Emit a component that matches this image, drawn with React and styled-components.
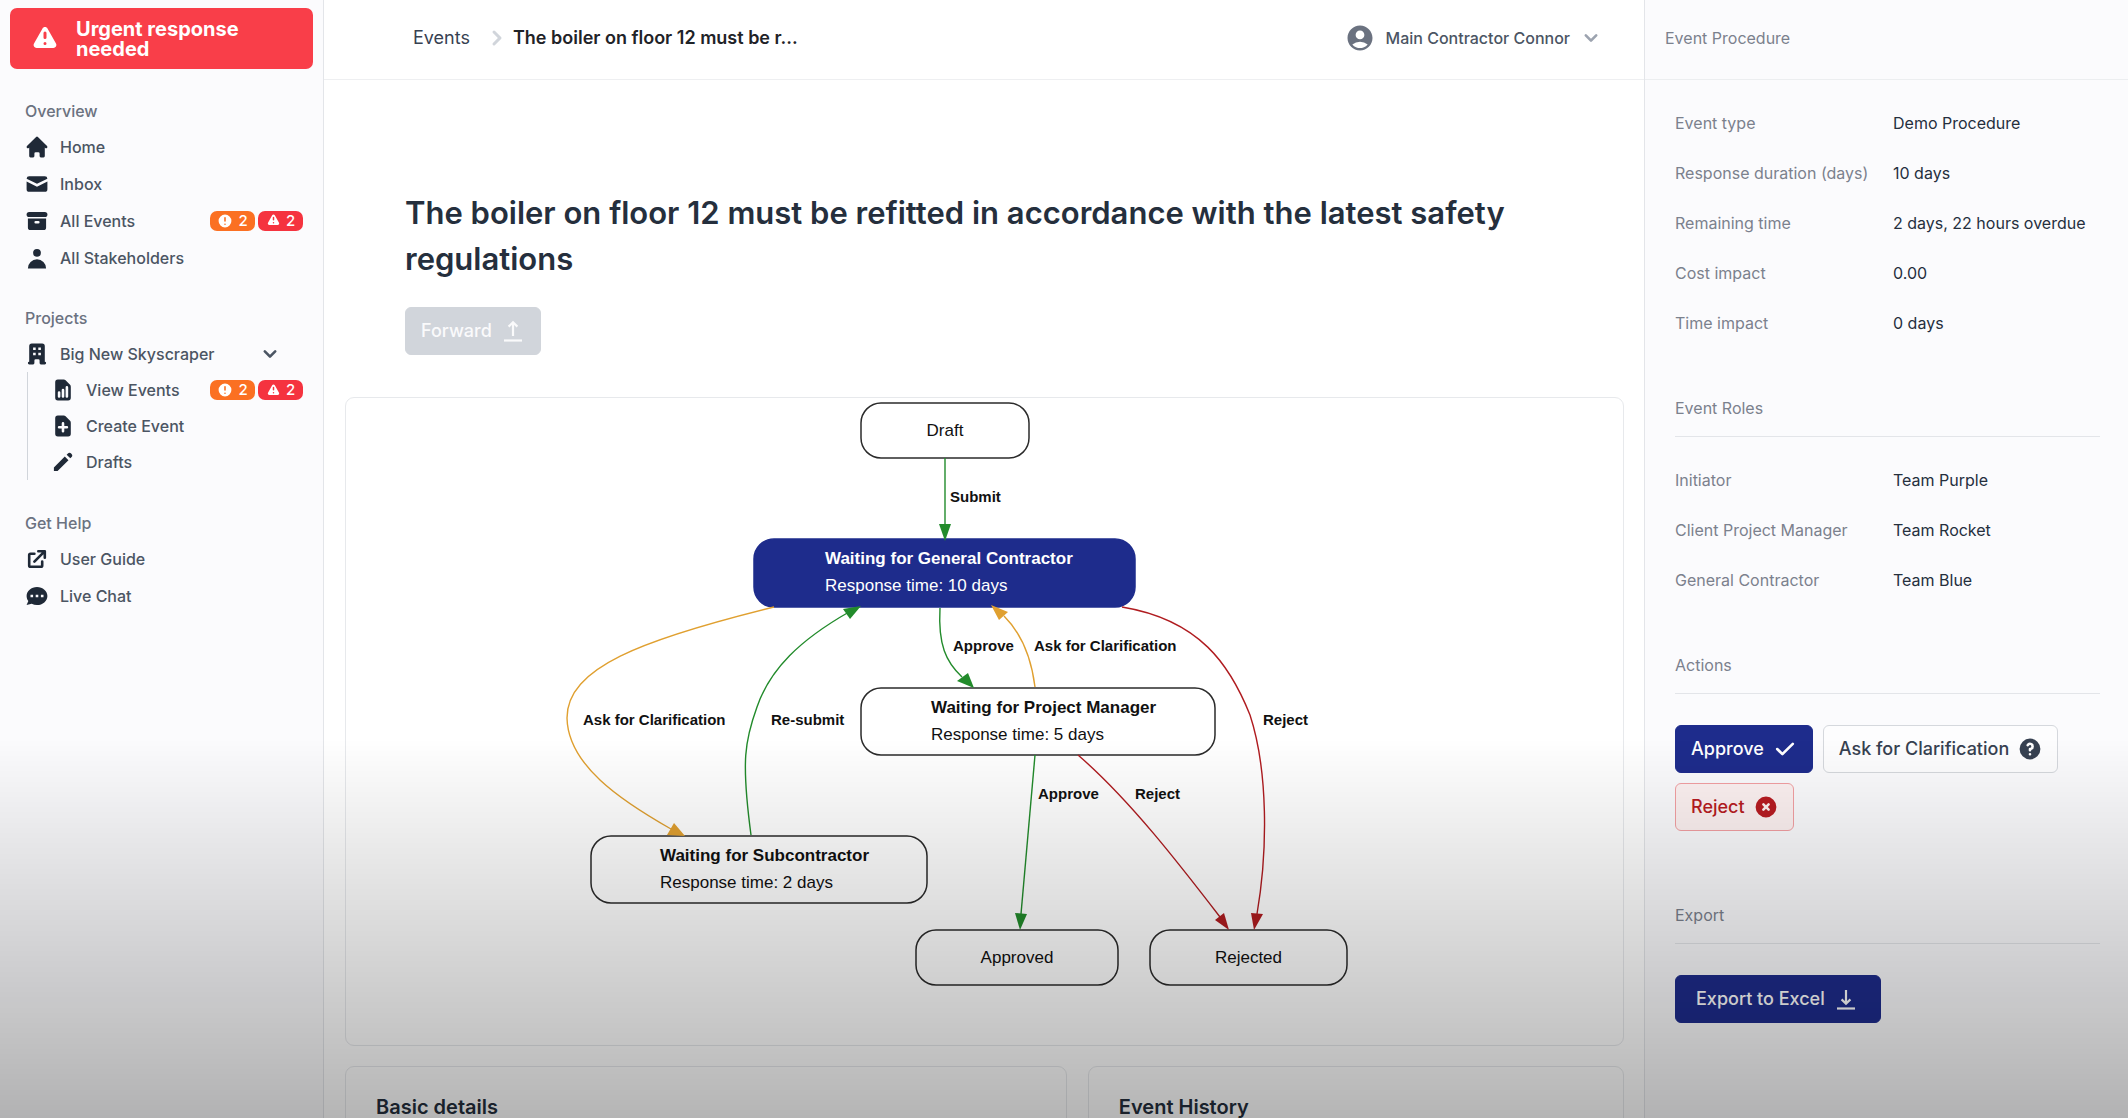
import React from "react";
import styled, { createGlobalStyle, css } from "styled-components";
import {
  HiArchive,
  HiChat,
  HiCheck,
  HiChevronDown,
  HiChevronRight,
  HiDocumentAdd,
  HiDocumentReport,
  HiExclamation,
  HiExclamationCircle,
  HiExternalLink,
  HiHome,
  HiMail,
  HiOfficeBuilding,
  HiPencil,
  HiQuestionMarkCircle,
  HiUser,
  HiXCircle,
} from "react-icons/hi";
import { MdAccountCircle } from "react-icons/md";

const GlobalStyle = createGlobalStyle`
  *, *::before, *::after { box-sizing: border-box; }
  body {
    margin: 0;
    background: #ffffff;
    color: #374151;
    font-family: Inter, "Liberation Sans", sans-serif;
    font-size: 16px;
    line-height: 24px;
  }
  button { font: inherit; cursor: pointer; }
  a { color: inherit; text-decoration: none; }
  svg { flex: none; display: block; }
`;

const Shell = styled.div`
  display: grid;
  grid-template-columns: 324px minmax(0, 1fr) 484px;
  height: 100vh;
  overflow: hidden;
`;

/* Darkens the foot of the window */
const BottomShade = styled.div`
  position: fixed;
  inset: auto 0 0 0;
  height: 34vh;
  background: linear-gradient(rgba(0, 0, 0, 0), rgba(0, 0, 0, 0.29));
  pointer-events: none;
`;

/* ---------- Sidebar ---------- */

const Sidebar = styled.aside`
  display: flex;
  flex-direction: column;
  gap: 22px;
  padding: 8px 10px;
  background: #fbfbfd;
  border-right: 1px solid #e3e5e9;
`;

const UrgentButton = styled.button`
  display: flex;
  align-items: center;
  gap: 16px;
  height: 61px;
  padding: 0 20px;
  border: 0;
  border-radius: 7px;
  background: #f93e49;
  color: #ffffff;
  font-size: 20px;
  line-height: 20px;
  font-weight: 700;
  text-align: left;
`;

const NavSection = styled.nav`
  display: flex;
  flex-direction: column;
`;

const NavHeading = styled.h2`
  height: 37px;
  margin: 0;
  padding: 8px 0 0 15px;
  font-size: 16px;
  line-height: 24px;
  font-weight: 500;
  color: #6b7280;
`;

const navRow = css`
  display: flex;
  align-items: center;
  gap: 10px;
  height: 37px;
  padding: 0 10px 0 14px;
  border: 0;
  background: none;
  color: #4b5563;
  font-size: 16px;
  font-weight: 500;
  text-align: left;
  > svg { color: #1f2937; }
`;

const NavLink = styled.a`
  ${navRow}
`;

const NavToggle = styled.button`
  ${navRow}
  padding-right: 30px;
  > svg:last-child { margin-left: auto; color: #4b5563; }
`;

const SubNav = styled.div`
  display: flex;
  flex-direction: column;
  margin: 0 0 1px 17px;
  border-left: 1px solid #d1d5db;
  ${NavLink} { height: 36px; padding-left: 22px; }
`;

const Badges = styled.span`
  display: flex;
  gap: 3px;
  margin-left: auto;
`;

const Badge = styled.span`
  display: flex;
  align-items: center;
  justify-content: center;
  gap: 5px;
  width: 45px;
  height: 20px;
  border-radius: 7px;
  background: ${(p) => (p.$tone === "danger" ? "#f5333f" : "#fb7022")};
  color: #ffffff;
  font-size: 15px;
  line-height: 20px;
  font-weight: 500;
`;

/* ---------- Main column ---------- */

const Main = styled.main`
  display: flex;
  flex-direction: column;
  min-width: 0;
  min-height: 0;
`;

const TopBar = styled.header`
  flex: none;
  display: flex;
  align-items: center;
  justify-content: space-between;
  height: 80px;
  padding: 0 40px 4px 89px;
  border-bottom: 1px solid #eeeff1;
`;

const Breadcrumb = styled.nav`
  display: flex;
  align-items: center;
  color: #374151;
  font-size: 18px;
  > svg { margin: 0 1px 0 12px; color: #d1d5db; }
`;

const Current = styled.span`
  color: #1f2328;
  font-weight: 600;
`;

const UserMenu = styled.button`
  display: flex;
  align-items: center;
  padding: 0;
  border: 0;
  background: none;
  color: #4b5563;
  font-size: 16px;
  font-weight: 500;
  > svg:first-child { margin-right: 11px; color: #6b7280; }
  > svg:last-child { margin-left: 8px; color: #9ca3af; }
`;

const Scroll = styled.div`
  flex: 1;
  min-height: 0;
  overflow-y: auto;
  scrollbar-width: none;
  padding: 0 20px 40px 21px;
`;

const TitleBlock = styled.section`
  display: flex;
  flex-direction: column;
  align-items: flex-start;
  gap: 25px;
  padding: 110px 60px 42px;
`;

const Title = styled.h1`
  margin: 0;
  color: #252f3d;
  font-size: 31px;
  line-height: 46px;
  font-weight: 600;
`;

const variants = {
  primary: css`
    background: #1e2c8c;
    border-color: #1e2c8c;
    color: #ffffff;
  `,
  plain: css`
    background: #fdfdfe;
    border-color: #d5d8dd;
    color: #374151;
  `,
  danger: css`
    background: #fdf2f2;
    border-color: #f3a0a3;
    color: #b81c22;
  `,
  disabled: css`
    background: #d1d5db;
    border-color: #d1d5db;
    color: #fafafb;
    cursor: default;
  `,
};

const Button = styled.button`
  display: inline-flex;
  align-items: center;
  gap: 8px;
  height: 48px;
  padding: 0 ${(p) => (p.$wide ? 21 : 14)}px 0 ${(p) => (p.$wide ? 20 : 15)}px;
  border: 1px solid;
  border-radius: 6px;
  font-size: 18px;
  font-weight: 500;
  ${(p) => variants[p.$variant]}
`;

const Card = styled.section`
  border: 1px solid #e7e9ec;
  border-radius: 9px;
  overflow: hidden;
`;

const CardGrid = styled.div`
  display: grid;
  grid-template-columns: repeat(7, minmax(0, 1fr));
  gap: 21px;
  margin-top: 20px;
`;

const DetailCard = styled(Card)`
  grid-column: span ${(p) => p.$span};
  min-height: 240px;
  padding: 26px 30px;
`;

const CardTitle = styled.h2`
  margin: 0;
  color: #252f3d;
  font-size: 20px;
  line-height: 28px;
  font-weight: 600;
`;

/* ---------- Workflow diagram ---------- */

const Diagram = styled.svg`
  display: block;
  width: 100%;
  height: auto;
  font-family: "Liberation Sans", Arial, sans-serif;
`;

const NodeShape = styled.rect`
  fill: ${(p) => (p.$active ? "#1e2c8c" : "none")};
  stroke: ${(p) => (p.$active ? "#1e2c8c" : "#2b2b2b")};
  stroke-width: 1.5;
`;

const NodeText = styled.text`
  font-size: 17px;
  font-weight: ${(p) => (p.$strong ? 700 : 400)};
  fill: ${(p) => (p.$active ? "#ffffff" : "#111111")};
  text-anchor: ${(p) => (p.$centered ? "middle" : "start")};
`;

const edgeColors = { green: "#228b2b", orange: "#e0a030", red: "#b01c20" };

const EdgeLine = styled.path`
  fill: none;
  stroke: ${(p) => edgeColors[p.$color]};
  stroke-width: 1.4;
`;

const EdgeHead = styled.polygon`
  fill: ${(p) => edgeColors[p.$color]};
`;

const EdgeLabel = styled.text`
  font-size: 15px;
  font-weight: 700;
  fill: #111111;
`;

const nodes = [
  { x: 861, y: 403, w: 168, h: 55, title: "Draft" },
  { x: 754, y: 539, w: 381, h: 68, title: "Waiting for General Contractor", time: "Response time: 10 days", tx: 825, active: true },
  { x: 861, y: 688, w: 354, h: 67, title: "Waiting for Project Manager", time: "Response time: 5 days", tx: 931 },
  { x: 591, y: 836, w: 336, h: 67, title: "Waiting for Subcontractor", time: "Response time: 2 days", tx: 660 },
  { x: 916, y: 930, w: 202, h: 55, title: "Approved" },
  { x: 1150, y: 930, w: 197, h: 55, title: "Rejected" },
];

const edges = [
  { color: "green", d: "M945 458 L945 525", head: "939,524 951,524 945,541", label: "Submit", lx: 950, ly: 502 },
  { color: "orange", d: "M774 607 C640 640 567 668 567 718 C568 765 620 800 671 829", head: "674,823 667,835 685,836", label: "Ask for Clarification", lx: 583, ly: 725 },
  { color: "green", d: "M751 835 C741 760 745 740 757 707 C770 669 800 640 849 612", head: "843,609 850,619 861,606", label: "Re-submit", lx: 771, ly: 725 },
  { color: "green", d: "M940 608 C938 645 946 662 962 677", head: "957,681 968,673 974,688", label: "Approve", lx: 953, ly: 651 },
  { color: "orange", d: "M1035 687 C1031 655 1020 632 1004 616", head: "999,620 1008,612 991,605", label: "Ask for Clarification", lx: 1034, ly: 651 },
  { color: "red", d: "M1122 607 C1200 620 1230 665 1250 715 C1268 770 1268 850 1257 914", head: "1251,913 1263,914 1254,930", label: "Reject", lx: 1263, ly: 725 },
  { color: "green", d: "M1035 755 L1021 914", head: "1015,913 1027,914 1020,930", label: "Approve", lx: 1038, ly: 799 },
  { color: "red", d: "M1078 755 C1130 800 1180 865 1220 917", head: "1215,920 1224,913 1229,930", label: "Reject", lx: 1135, ly: 799 },
];

function Workflow() {
  return (
    <Diagram viewBox="346 398 1277 647" role="img" aria-label="Workflow">
      {nodes.map((n) => (
        <g key={n.title}>
          <NodeShape x={n.x} y={n.y} width={n.w} height={n.h} rx="20" $active={n.active} />
          {n.time ? (
            <>
              <NodeText x={n.tx} y={n.y + 25} $strong $active={n.active}>{n.title}</NodeText>
              <NodeText x={n.tx} y={n.y + 52} $active={n.active}>{n.time}</NodeText>
            </>
          ) : (
            <NodeText x={n.x + n.w / 2} y={n.y + 33} $centered>{n.title}</NodeText>
          )}
        </g>
      ))}
      {edges.map((e) => (
        <g key={e.d}>
          <EdgeLine d={e.d} $color={e.color} />
          <EdgeHead points={e.head} $color={e.color} />
          <EdgeLabel x={e.lx} y={e.ly}>{e.label}</EdgeLabel>
        </g>
      ))}
    </Diagram>
  );
}

/* ---------- Procedure panel ---------- */

const Panel = styled.aside`
  background: #fbfbfd;
  border-left: 1px solid #e3e5e9;
`;

const PanelHeader = styled.header`
  display: flex;
  align-items: center;
  height: 80px;
  padding: 0 20px 4px;
  border-bottom: 1px solid #eceef0;
  color: #7b818d;
  font-size: 16px;
`;

const PanelBody = styled.div`
  padding: 0 28px 0 30px;
`;

const Facts = styled.dl`
  margin: 18px 0 48px;
`;

const Fact = styled.div`
  display: grid;
  grid-template-columns: 218px 1fr;
  align-items: center;
  height: 50px;
  dt { color: #7b818d; }
  dd { margin: 0; color: #252f3d; }
`;

const PanelTitle = styled.h2`
  margin: 0;
  padding-bottom: 16px;
  border-bottom: 1px solid #e3e5e9;
  color: #7b818d;
  font-size: 16px;
  font-weight: 400;
`;

const ButtonRow = styled.div`
  display: flex;
  flex-wrap: wrap;
  gap: 10px;
  margin: 31px 0 72px;
`;

/* Arrow over a tray line; points up or down */
const ArrowIcon = ({ up }) => (
  <svg width="26" height="26" viewBox="0 0 26 26" fill="none" stroke="currentColor" strokeWidth="2.2" aria-hidden="true">
    <path d="M4 22.5h18" />
    {up ? <path d="M13 18V4.5M8.6 8.6L13 4.2l4.4 4.4" /> : <path d="M13 4v13.5M8.6 13.4l4.4 4.4 4.4-4.4" />}
  </svg>
);

const EventBadges = () => (
  <Badges>
    <Badge $tone="warning"><HiExclamationCircle size={16} />2</Badge>
    <Badge $tone="danger"><HiExclamation size={15} />2</Badge>
  </Badges>
);

const procedure = [
  ["Event type", "Demo Procedure"],
  ["Response duration (days)", "10 days"],
  ["Remaining time", "2 days, 22 hours overdue"],
  ["Cost impact", "0.00"],
  ["Time impact", "0 days"],
];

const roles = [
  ["Initiator", "Team Purple"],
  ["Client Project Manager", "Team Rocket"],
  ["General Contractor", "Team Blue"],
];

const FactList = ({ items }) => (
  <Facts>
    {items.map(([term, value]) => (
      <Fact key={term}>
        <dt>{term}</dt>
        <dd>{value}</dd>
      </Fact>
    ))}
  </Facts>
);

export default function App() {
  return (
    <>
      <GlobalStyle />
      <Shell>
        <Sidebar>
          <UrgentButton type="button">
            <HiExclamation size={30} />
            <span>Urgent response needed</span>
          </UrgentButton>

          <NavSection>
            <NavHeading>Overview</NavHeading>
            <NavLink href="#home"><HiHome size={26} />Home</NavLink>
            <NavLink href="#inbox"><HiMail size={26} />Inbox</NavLink>
            <NavLink href="#events"><HiArchive size={26} />All Events<EventBadges /></NavLink>
            <NavLink href="#stakeholders"><HiUser size={26} />All Stakeholders</NavLink>
          </NavSection>

          <NavSection>
            <NavHeading>Projects</NavHeading>
            <NavToggle type="button" aria-expanded="true">
              <HiOfficeBuilding size={26} />Big New Skyscraper<HiChevronDown size={26} />
            </NavToggle>
            <SubNav>
              <NavLink href="#view"><HiDocumentReport size={26} />View Events<EventBadges /></NavLink>
              <NavLink href="#create"><HiDocumentAdd size={26} />Create Event</NavLink>
              <NavLink href="#drafts"><HiPencil size={26} />Drafts</NavLink>
            </SubNav>
          </NavSection>

          <NavSection>
            <NavHeading>Get Help</NavHeading>
            <NavLink href="#guide"><HiExternalLink size={26} />User Guide</NavLink>
            <NavLink href="#chat"><HiChat size={26} />Live Chat</NavLink>
          </NavSection>
        </Sidebar>

        <Main>
          <TopBar>
            <Breadcrumb aria-label="Breadcrumb">
              <a href="#events">Events</a>
              <HiChevronRight size={30} />
              <Current>The boiler on floor 12 must be r...</Current>
            </Breadcrumb>
            <UserMenu type="button">
              <MdAccountCircle size={30} />
              Main Contractor Connor
              <HiChevronDown size={26} />
            </UserMenu>
          </TopBar>

          <Scroll>
            <TitleBlock>
              <Title>
                The boiler on floor 12 must be refitted in accordance with the latest safety regulations
              </Title>
              <Button type="button" $variant="disabled" disabled>Forward<ArrowIcon up /></Button>
            </TitleBlock>
            <Card><Workflow /></Card>
            <CardGrid>
              <DetailCard $span={4}><CardTitle>Basic details</CardTitle></DetailCard>
              <DetailCard $span={3}><CardTitle>Event History</CardTitle></DetailCard>
            </CardGrid>
          </Scroll>
        </Main>

        <Panel>
          <PanelHeader>Event Procedure</PanelHeader>
          <PanelBody>
            <FactList items={procedure} />
            <PanelTitle>Event Roles</PanelTitle>
            <FactList items={roles} />
            <PanelTitle>Actions</PanelTitle>
            <ButtonRow>
              <Button type="button" $variant="primary">Approve<HiCheck size={26} /></Button>
              <Button type="button" $variant="plain">Ask for Clarification<HiQuestionMarkCircle size={26} /></Button>
              <Button type="button" $variant="danger">Reject<HiXCircle size={26} /></Button>
            </ButtonRow>
            <PanelTitle>Export</PanelTitle>
            <ButtonRow>
              <Button type="button" $variant="primary" $wide>Export to Excel<ArrowIcon /></Button>
            </ButtonRow>
          </PanelBody>
        </Panel>
      </Shell>
      <BottomShade />
    </>
  );
}
